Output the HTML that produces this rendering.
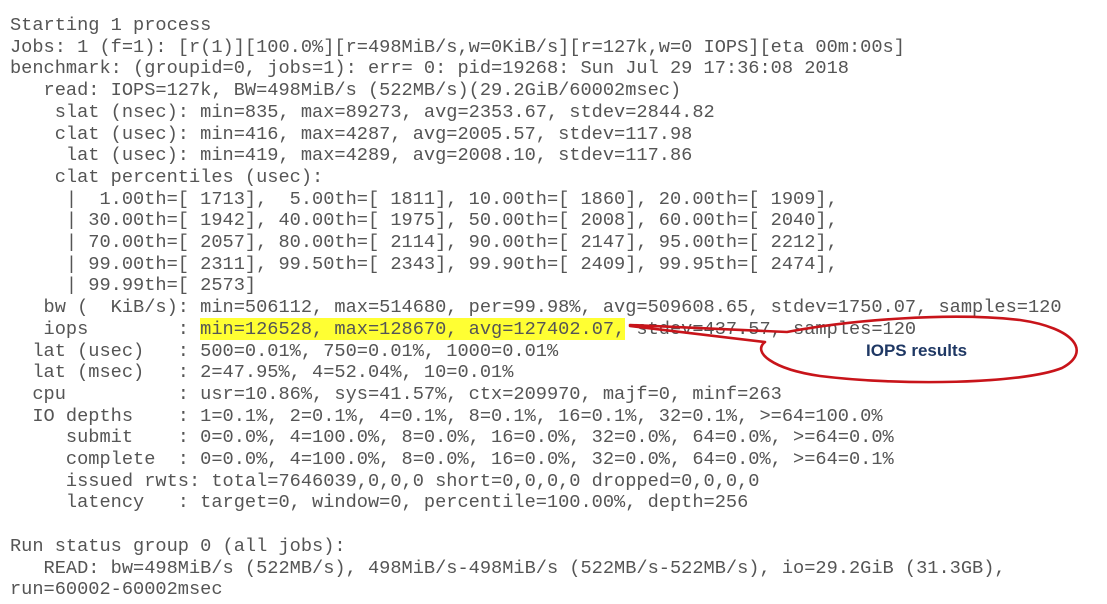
<!DOCTYPE html>
<html><head><meta charset="utf-8"><style>
html,body{margin:0;padding:0;background:#fff;width:1107px;height:604px;overflow:hidden;position:relative}
pre{position:absolute;left:10px;top:15px;margin:0;font-family:"Liberation Mono",monospace;font-size:18.65px;line-height:21.7px;color:#555;letter-spacing:0}
.hl{background:#ffff33}
svg{position:absolute;left:0;top:0}
.lbl{position:absolute;left:866px;top:341px;font-family:"Liberation Sans",sans-serif;font-weight:bold;font-size:17px;color:#1f3864}
</style></head><body>
<pre>Starting 1 process
Jobs: 1 (f=1): [r(1)][100.0%][r=498MiB/s,w=0KiB/s][r=127k,w=0 IOPS][eta 00m:00s]
benchmark: (groupid=0, jobs=1): err= 0: pid=19268: Sun Jul 29 17:36:08 2018
   read: IOPS=127k, BW=498MiB/s (522MB/s)(29.2GiB/60002msec)
    slat (nsec): min=835, max=89273, avg=2353.67, stdev=2844.82
    clat (usec): min=416, max=4287, avg=2005.57, stdev=117.98
     lat (usec): min=419, max=4289, avg=2008.10, stdev=117.86
    clat percentiles (usec):
     |  1.00th=[ 1713],  5.00th=[ 1811], 10.00th=[ 1860], 20.00th=[ 1909],
     | 30.00th=[ 1942], 40.00th=[ 1975], 50.00th=[ 2008], 60.00th=[ 2040],
     | 70.00th=[ 2057], 80.00th=[ 2114], 90.00th=[ 2147], 95.00th=[ 2212],
     | 99.00th=[ 2311], 99.50th=[ 2343], 99.90th=[ 2409], 99.95th=[ 2474],
     | 99.99th=[ 2573]
   bw (  KiB/s): min=506112, max=514680, per=99.98%, avg=509608.65, stdev=1750.07, samples=120
   iops        : <span class="hl">min=126528, max=128670, avg=127402.07,</span> stdev=437.57, samples=120
  lat (usec)   : 500=0.01%, 750=0.01%, 1000=0.01%
  lat (msec)   : 2=47.95%, 4=52.04%, 10=0.01%
  cpu          : usr=10.86%, sys=41.57%, ctx=209970, majf=0, minf=263
  IO depths    : 1=0.1%, 2=0.1%, 4=0.1%, 8=0.1%, 16=0.1%, 32=0.1%, &gt;=64=100.0%
     submit    : 0=0.0%, 4=100.0%, 8=0.0%, 16=0.0%, 32=0.0%, 64=0.0%, &gt;=64=0.0%
     complete  : 0=0.0%, 4=100.0%, 8=0.0%, 16=0.0%, 32=0.0%, 64=0.0%, &gt;=64=0.1%
     issued rwts: total=7646039,0,0,0 short=0,0,0,0 dropped=0,0,0,0
     latency   : target=0, window=0, percentile=100.00%, depth=256

Run status group 0 (all jobs):
   READ: bw=498MiB/s (522MB/s), 498MiB/s-498MiB/s (522MB/s-522MB/s), io=29.2GiB (31.3GB),
run=60002-60002msec</pre>
<svg width="1107" height="604" viewBox="0 0 1107 604">
<path d="M630,325 L787,332 C850,320 950,312 1020,320 C1075,328 1092,352 1062,368 C1022,384 900,386 820,376 C772,369 752,352 765,342 L630,326 Z" fill="none" stroke="#c8141a" stroke-width="2.6" stroke-linejoin="round"/>
</svg>
<div class="lbl">IOPS results</div>
</body></html>
